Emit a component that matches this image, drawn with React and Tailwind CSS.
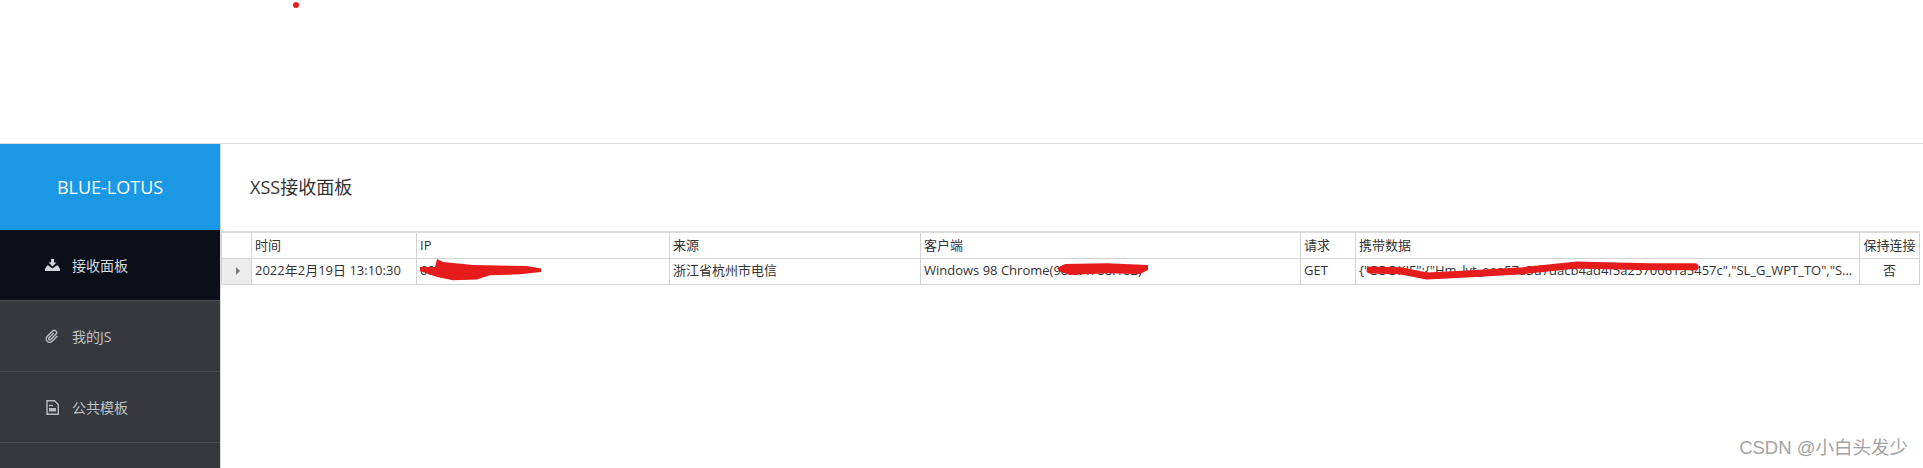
import React from 'react';

const navItems = [
  { name: '接收面板', icon: 'download', active: true },
  { name: '我的JS', icon: 'clip' },
  { name: '公共模板', icon: 'file' },
];

const columns = [
  { label: '', width: 'w-[30px]' },
  { label: '时间', width: 'w-[165px]' },
  { label: 'IP', width: 'w-[253px]' },
  { label: '来源', width: 'w-[251px]' },
  { label: '客户端', width: 'w-[380px]' },
  { label: '请求', width: 'w-[55px]' },
  { label: '携带数据', width: 'w-[504px]' },
  { label: '保持连接', width: 'w-[60px]' },
];

const NavIcon = ({ type }) => {
  if (type === 'download') {
    return (
      <svg viewBox="0 0 15 12" className="w-[15px] h-[12px] fill-[#d4d6da]">
        <path d="M6 0h3v3.500h2.500L7.500 7.500 3.500 3.500H6z" />
        <path d="M0 12V10L2 6.500h1.500L7.500 9.500l4-3H13l2 3.500v2z" />
      </svg>
    );
  }
  if (type === 'clip') {
    return (
      <svg viewBox="0 0 24 24" className="w-[14px] h-[15px] fill-none stroke-[#b9bcc2] stroke-[2.4]">
        <path d="m21.4 11.1-9.200 9.200a6 6 0 0 1-8.500-8.500l9.200-9.200a4 4 0 0 1 5.700 5.700l-9.200 9.200a2 2 0 0 1-2.800-2.800l8.500-8.500" />
      </svg>
    );
  }
  return (
    <svg viewBox="0 0 13 15" className="w-[13px] h-[15px] fill-none stroke-[#b9bcc2] stroke-[1.4]">
      <path d="M1 .7h7.500L12.300 4.500v9.800H1z" />
      <path d="M3 8h7v3.500H3z" className="fill-[#b9bcc2] stroke-none" />
      <path d="M3 5.500h4" />
    </svg>
  );
};

export default function App() {
  return (
    <div className="relative h-[468px] w-[1923px] overflow-hidden bg-white font-['Open_Sans','Noto_Sans_CJK_SC',sans-serif]">
      {/* stray red dot */}
      <div className="absolute left-[293px] top-[2px] w-[6px] h-[6px] rounded-full bg-[#e61f1f]"></div>

      <div className="h-[143px]"></div>

      <div className="flex h-[325px] border-t border-[#dddddd]">
        {/* Sidebar */}
        <aside className="w-[220px] shrink-0 bg-[#37383e] flex flex-col">
          <div className="h-[86px] bg-[#1a98e6] flex items-center justify-center text-white text-[18px]">BLUE-LOTUS</div>
          {navItems.map((item) => (
            <div
              key={item.name}
              className={`h-[71px] flex items-center pl-[44px] gap-[12px] text-[14px] border-b border-[#4a4b50] ${
                item.active ? 'bg-[#0c0f17] text-[#d8dade]' : 'text-[#bfc1c6]'
              }`}
            >
              <span className="w-[16px] flex justify-center"><NavIcon type={item.icon} /></span>
              <span className="pt-[1px]">{item.name}</span>
            </div>
          ))}
        </aside>

        {/* Main */}
        <main className="flex-1 min-w-0 border-l border-[#dcdcdc]">
          <div className="h-[87px] flex items-center pl-[29px] text-[18px] text-[#333333]">XSS接收面板</div>
          <div className="relative">
            <table className="table-fixed border-collapse w-[1698px] text-[13px] text-[#333333] border-t-2 border-[#dcdcdc]">
              <colgroup>
                {columns.map((c) => (
                  <col key={c.label} className={c.width} />
                ))}
              </colgroup>
              <thead>
                <tr className="h-[26px]">
                  {columns.map((c, i) => (
                    <th
                      key={c.label}
                      className={`border border-[#d4d4d4] font-normal truncate ${i === 7 ? 'px-[1px] text-center' : 'text-left px-[3px]'}`}
                    >
                      {c.label}
                    </th>
                  ))}
                </tr>
              </thead>
              <tbody>
                <tr className="h-[26px]">
                  <td className="border border-[#d4d4d4] bg-[#ececec]">
                    <div className="ml-[14px] w-0 h-0 border-y-[4px] border-y-transparent border-l-[4px] border-l-[#777777]"></div>
                  </td>
                  <td className="border border-[#d4d4d4] px-[3px] truncate">2022年2月19日 13:10:30</td>
                  <td className="border border-[#d4d4d4] px-[3px] truncate">60.176.66.149</td>
                  <td className="border border-[#d4d4d4] px-[3px] truncate">浙江省杭州市电信</td>
                  <td className="border border-[#d4d4d4] px-[3px] truncate">Windows 98 Chrome(98.0.4758.102)</td>
                  <td className="border border-[#d4d4d4] px-[3px] truncate">GET</td>
                  <td className="border border-[#d4d4d4] px-[3px] truncate">{'{"COOKIE":{"Hm_lvt_eea57a3d7dacb4ad4f5a2570061a5457c","SL_G_WPT_TO","S...'}</td>
                  <td className="border border-[#d4d4d4] text-center">否</td>
                </tr>
              </tbody>
            </table>

            {/* red marker scribbles over the row */}
            <svg viewBox="0 0 1703 60" className="absolute left-[-1px] top-0 w-[1703px] h-[60px] pointer-events-none">
              <path
                className="fill-[#e61c1c]"
                d="M200 36h15l2-8 6 3 30 3 54 1 14 2.500v3.500l-21 2.300-30 1-13 4.300-24 .7-16-3.300-17-6z"
              />
              <path
                className="fill-[#e61c1c]"
                d="M837 37l8-4 42-.7 41 1.700v5l-8 4-33-.7-37 1.700-10-3.300z"
              />
              <path
                className="fill-none stroke-[#e61c1c]"
                strokeWidth="7"
                strokeLinecap="round"
                strokeLinejoin="round"
                d="M1150 39l30 .7 27 5.300 40-2 56-3.300 54-5.700 40 1 33 .7 45 0"
              />
            </svg>
          </div>
        </main>
      </div>

      {/* CSDN watermark */}
      <div className="absolute right-[15px] top-[435px] text-[18.5px] leading-[26px] text-[#a3a3a3] font-['Liberation_Sans','Noto_Sans_CJK_SC',sans-serif]">CSDN @小白头发少</div>
    </div>
  );
}
